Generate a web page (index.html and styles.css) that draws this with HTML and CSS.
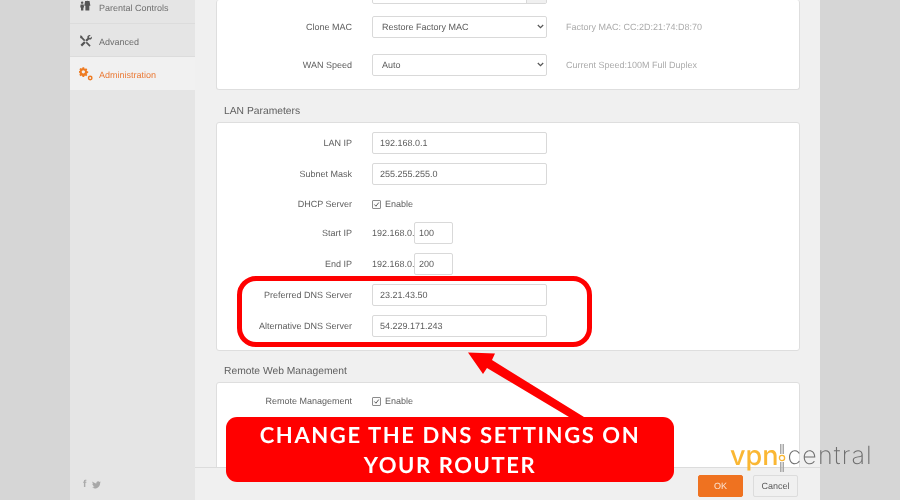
FILE: index.html
```html
<!DOCTYPE html>
<html lang="en">
<head>
<meta charset="utf-8">
<title>Change the DNS settings on your router</title>
<link rel="stylesheet" href="styles.css">
</head>
<body>
<div class="page">
  <aside class="sidebar">
    <nav class="nav">
      <a class="nav-item nav-first">
        <svg class="nav-icon" viewBox="0 0 16 16"><circle cx="9.500" cy="2.200" r="2"/><path d="M7 5h5l1 5.500h-1.200v5.500H7.300v-5.500H6z"/><circle cx="3.600" cy="7" r="1.400"/><path d="M1.800 9h3.600l.4 3.500H5V16H2.300v-3.500h-.9z"/></svg>
        <span>Parental Controls</span>
      </a>
      <a class="nav-item">
        <svg class="nav-icon" viewBox="0 0 16 16"><path d="M1.500 1.500l2 .8.600 1.500 9.200 9.400-1.300 1.300-9.300-9.300-1.400-.7zM14.800 2.800l-2.300 2.100-1.400-1.400 2.200-2.200c-1.900-.7-3.800.5-3.800 2.400l.2.900-8 7.700 1.800 1.900 7.900-7.900.8.100c1.900.1 3-1.800 2.400-3.600z"/></svg>
        <span>Advanced</span>
      </a>
      <a class="nav-item nav-active">
        <svg class="nav-icon" viewBox="0 0 16 16"><path fill-rule="evenodd" d="M5 .5h2.400l.3 1.600 1.100.5 1.400-.9 1.700 1.700-.9 1.400.5 1.100 1.600.3v2.400l-1.600.3-.5 1.100.9 1.400-1.700 1.700-1.400-.9-1.100.5-.3 1.500H5l-.3-1.500-1.100-.5-1.400.9L.5 10.900l.9-1.400-.5-1.100L0 8V5.700l1-.1.500-1.100-.9-1.400 1.600-1.700 1.400.9 1.100-.5zM6.200 4.500a2.400 2.400 0 1 0 0 4.800 2.400 2.400 0 0 0 0-4.800z" transform="scale(.8)"/><path fill-rule="evenodd" d="M12.800 9.800a2.800 2.800 0 1 1 0 5.600 2.800 2.800 0 0 1 0-5.600zm0 1.700a1.100 1.100 0 1 0 0 2.200 1.100 1.100 0 0 0 0-2.200z"/></svg>
        <span>Administration</span>
      </a>
    </nav>
    <div class="social">
      <span class="social-f">f</span>
      <svg class="social-t" viewBox="0 0 16 14"><path d="M16 2c-.6.300-1.200.4-1.900.5.700-.4 1.200-1 1.400-1.800-.6.400-1.300.6-2 .8C12.900.6 12 .2 11 .2c-1.800 0-3.300 1.500-3.300 3.300 0 .3 0 .5.100.7C5.100 4.100 2.700 2.800 1.100.8c-.3.500-.4 1-.4 1.600 0 1.100.6 2.100 1.400 2.700-.5 0-1-.2-1.500-.4 0 1.600 1.100 2.900 2.600 3.200-.5.100-1 .2-1.500.1.400 1.300 1.600 2.200 3 2.300C3.600 11.200 1.800 11.800 0 11.600c1.500.9 3.200 1.500 5 1.500 6 0 9.400-5 9.400-9.400v-.4c.6-.5 1.200-1.100 1.600-1.800z"/></svg>
    </div>
  </aside>

  <main class="main">
    <div class="content">
      <section class="card card-wan">
        <div class="row row-stub">
          <span class="label"></span>
          <span class="stub-field"><span class="stub-btn"></span></span>
        </div>
        <div class="row">
          <label class="label">Clone MAC</label>
          <span class="select-wrap">
            <select class="field select"><option>Restore Factory MAC</option></select>
            <svg class="chevron" viewBox="0 0 7 5"><path d="M.8 1l2.700 2.700L6.200 1"/></svg>
          </span>
          <span class="hint">Factory MAC: CC:2D:21:74:D8:70</span>
        </div>
        <div class="row">
          <label class="label">WAN Speed</label>
          <span class="select-wrap">
            <select class="field select"><option>Auto</option></select>
            <svg class="chevron" viewBox="0 0 7 5"><path d="M.8 1l2.700 2.700L6.200 1"/></svg>
          </span>
          <span class="hint">Current Speed:100M Full Duplex</span>
        </div>
      </section>

      <h2 class="section-title">LAN Parameters</h2>
      <section class="card card-lan">
        <div class="row"><label class="label">LAN IP</label><input class="field" value="192.168.0.1"></div>
        <div class="row"><label class="label">Subnet Mask</label><input class="field" value="255.255.255.0"></div>
        <div class="row row-check">
          <label class="label">DHCP Server</label>
          <span class="check"><svg viewBox="0 0 9 9"><path d="M1.800 4.500l2 2.200 3.600-4.700"/></svg></span>
          <span class="check-text">Enable</span>
        </div>
        <div class="row"><label class="label">Start IP</label><span class="prefix">192.168.0.</span><input class="field field-short" value="100"></div>
        <div class="row"><label class="label">End IP</label><span class="prefix">192.168.0.</span><input class="field field-short" value="200"></div>
        <div class="row"><label class="label">Preferred DNS Server</label><input class="field" value="23.21.43.50"></div>
        <div class="row"><label class="label">Alternative DNS Server</label><input class="field" value="54.229.171.243"></div>
      </section>

      <h2 class="section-title">Remote Web Management</h2>
      <section class="card card-remote">
        <div class="row row-check">
          <label class="label">Remote Management</label>
          <span class="check"><svg viewBox="0 0 9 9"><path d="M1.800 4.500l2 2.200 3.600-4.700"/></svg></span>
          <span class="check-text">Enable</span>
        </div>
      </section>
    </div>
    <footer class="footer">
      <button class="btn btn-ok">OK</button>
      <button class="btn btn-cancel">Cancel</button>
    </footer>
  </main>
</div>

<div class="callout-ring"></div>
<svg class="callout-arrow" viewBox="0 0 900 500"><polygon points="468,352.500 495,353.500 492,360 584,417 569,417 487,368 483,374"/></svg>
<div class="banner">CHANGE THE DNS SETTINGS ON<br>YOUR ROUTER</div>
<div class="logo">
  <span class="logo-vpn">vpn</span>
  <svg class="logo-mark" viewBox="0 0 8 28"><path class="mark-bar" d="M2 0h1.500v10H2zM4.500 0H6v10H4.500zM2 18h1.500v10H2zM4.500 18H6v10H4.500z"/><circle class="mark-dot" cx="4" cy="14" r="2.600"/></svg>
  <span class="logo-central">central</span>
</div>
</body>
</html>
```

FILE: styles.css
```css
* { box-sizing: border-box; }
html, body { margin: 0; height: 100%; }
body {
  position: relative;
  width: 900px;
  height: 500px;
  overflow: hidden;
  background: #d6d6d6;
  font-family: "Liberation Sans", Arial, sans-serif;
  font-size: 9px;
  color: #5c5c5c;
  text-rendering: geometricPrecision;
}
.page {
  display: flex;
  height: 500px;
  margin-left: 70px;
  width: 750px;
  filter: blur(.35px);
}

/* Sidebar */
.sidebar {
  width: 125px;
  background: #e5e5e5;
  display: flex;
  flex-direction: column;
  justify-content: space-between;
}
.nav { display: flex; flex-direction: column; }
.nav-item {
  display: flex;
  align-items: center;
  gap: 6px;
  height: 33px;
  padding: 1px 0 0 9px;
  border-bottom: 1px solid #dcdcdc;
  color: #6f6f6f;
}
.nav-item span { margin-top: 2px; }
.nav-first { height: 24px; padding-top: 0; align-items: flex-start; }
.nav-first span { margin-top: 3px; }
.nav-icon { width: 14px; height: 14px; fill: #555; flex: none; }
.nav-first .nav-icon { margin-top: -5px; height: 17px; }
.nav-active { background: #f1f1f1; color: #ea7a36; border-bottom: 0; }
.nav-active .nav-icon { fill: #ee7b22; }
.social { display: flex; align-items: center; gap: 6px; padding: 0 0 10px 13px; }
.social-f { font-weight: 700; font-size: 10px; color: #aaa; }
.social-t { width: 9px; height: 8px; fill: #a8a8a8; }

/* Main */
.main {
  width: 625px;
  position: relative;
  background: #f0f0f0;
  overflow: hidden;
}
.content { padding: 0 20px 0 21px; }
.card {
  background: #fff;
  border: 1px solid #dedede;
  border-radius: 3px;
  display: flex;
  flex-direction: column;
}
.card-wan {
  height: 90px;
  margin-bottom: 1px;
  border-top: 0;
  justify-content: flex-end;
  padding-bottom: 13px;
  gap: 16px;
  overflow: hidden;
}
.row-stub { margin-bottom: -4px; }
.card-lan { height: 229px; padding-top: 9px; gap: 9px; }
.card-remote { height: 120px; padding-top: 8px; }
.section-title {
  margin: 0;
  height: 31px;
  padding: 15px 0 0 8px;
  line-height: 12px;
  font-size: 10.300px;
  font-weight: 400;
  color: #606060;
}

.row { display: flex; align-items: center; height: 22px; flex: none; }
.row-check { height: 19px; padding-top: 1px; }
.label { width: 135px; text-align: right; margin-right: 20px; flex: none; color: #5f5f5f; padding-bottom: 1px; }
.row-check .label { padding-bottom: 0; }
.field {
  width: 175px;
  height: 22px;
  border: 1px solid #d9d9d9;
  border-radius: 2px;
  background: #fff;
  padding: 0 7px;
  font: inherit;
  color: #5c5c5c;
  outline: 0;
  text-rendering: inherit;
}
.select-wrap { position: relative; display: flex; width: 175px; height: 22px; flex: none; }
.select { appearance: none; padding: 0 0 0 9px; }
.chevron {
  position: absolute;
  right: 3px;
  top: 8px;
  width: 7px;
  height: 5px;
  fill: none;
  stroke: #555;
  stroke-width: 1.200;
}
.field-short { width: 39px; padding: 0 4px; }
.prefix { width: 42px; flex: none; }
.hint { margin-left: 19px; color: #ababab; padding-bottom: 1px; }
.stub-field {
  width: 175px;
  height: 22px;
  border: 1px solid #d9d9d9;
  border-radius: 2px;
  display: flex;
  justify-content: flex-end;
}
.stub-btn { width: 20px; background: #f0f0f0; border-left: 1px solid #d9d9d9; }
.check {
  width: 9px;
  height: 9px;
  border: 1px solid #8c8c8c;
  border-radius: 1px;
  background: #fbfbfb;
  flex: none;
  margin-right: 4px;
  display: flex;
}
.check svg { width: 100%; height: 100%; fill: none; stroke: #444; stroke-width: 1.100; }
.check-text { color: #5f5f5f; }

/* Footer */
.footer {
  position: absolute;
  left: 0;
  right: 0;
  bottom: 0;
  height: 33px;
  background: #f0f0f0;
  border-top: 1px solid #dcdcdc;
  display: flex;
  justify-content: flex-end;
  align-items: center;
  gap: 10px;
  padding: 3px 22px 0 0;
}
.btn {
  width: 45px;
  height: 22px;
  border-radius: 2px;
  font: inherit;
  padding: 0;
  text-rendering: inherit;
}
.btn-ok { background: #ef7220; border: 1px solid #ef7220; color: #fbe3d2; }
.btn-cancel { background: #f0f0f0; border: 1px solid #dcdcdc; color: #5c5c5c; }

/* Annotation overlay */
.callout-ring {
  position: absolute;
  left: 237px;
  top: 276px;
  width: 355px;
  height: 71px;
  border: 5px solid #f00;
  border-radius: 19px;
}
.callout-arrow {
  position: absolute;
  inset: 0;
  width: 900px;
  height: 500px;
  fill: #f00;
}
.banner {
  position: absolute;
  left: 226px;
  top: 417px;
  width: 448px;
  height: 65px;
  background: #f00;
  border-radius: 11px;
  color: #fff;
  font-family: Lato, "Liberation Sans", sans-serif;
  font-weight: 700;
  font-size: 22px;
  line-height: 30px;
  letter-spacing: 1.600px;
  text-align: center;
  padding-top: 3px;
  filter: blur(.25px);
}
.logo {
  position: absolute;
  left: 730px;
  top: 444px;
  display: flex;
  align-items: center;
  height: 28px;
  line-height: 28px;
  font-family: Inter, "Liberation Sans", sans-serif;
  filter: blur(.25px);
}
.logo-vpn { color: #fab733; font-weight: 500; font-size: 27px; margin-top: -4px; }
.logo-central { color: #6f6f6f; font-weight: 200; font-size: 25px; letter-spacing: 1.200px; margin: -4px 0 0 1px; }
.logo-mark { width: 8px; height: 28px; flex: none; }
.mark-bar { fill: #a9a9a9; }
.mark-dot { fill: #fff; stroke: #fab733; stroke-width: 1.300; }
```
